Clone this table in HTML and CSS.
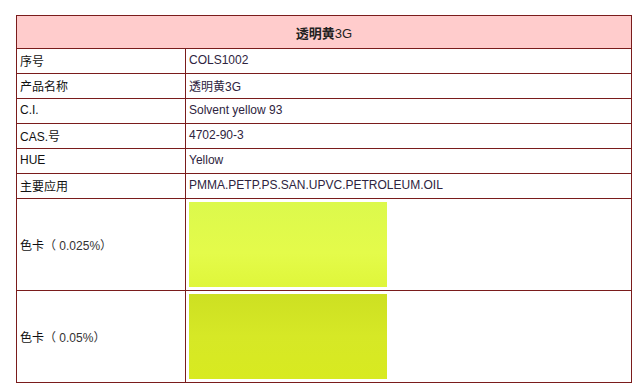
FILE: index.html
```html
<html lang="zh">

<head>
    <meta charset="UTF-8">
    <meta name="viewport" content="width=device-width, initial-scale=1.0">
    <title>透明黄3G</title>

    <link rel="stylesheet" href="styles.css">
</head>

<body>
    <table class="spec">
        <tr>
            <th colspan="2"><b>透明黄</b>3G</th>
        </tr>
        <tr>
            <td class="name">序号</td>
            <td>COLS1002</td>
        </tr>
        <tr>
            <td class="name">产品名称</td>
            <td>透明黄3G</td>
        </tr>
        <tr>
            <td class="name">C.I.</td>
            <td>Solvent yellow 93</td>
        </tr>
        <tr>
            <td class="name">CAS.号</td>
            <td>4702-90-3</td>
        </tr>
        <tr>
            <td class="name">HUE</td>
            <td>Yellow</td>
        </tr>
        <tr>
            <td class="name">主要应用</td>
            <td>PMMA.PETP.PS.SAN.UPVC.PETROLEUM.OIL</td>
        </tr>
        <tr class="card">
            <td class="name">色卡<span class="num">（ 0.025%）</span></td>
            <td><div class="swatch light"></div></td>
        </tr>
        <tr class="card">
            <td class="name">色卡<span class="num">（ 0.05%）</span></td>
            <td><div class="swatch deep"></div></td>
        </tr>
    </table>
</body>

</html>
```

FILE: styles.css
```css
* {
    box-sizing: border-box;
    margin: 0;
    padding: 0;
}

body {
    background: #fff;
    padding: 15px 0 0 16px;
    font-family: "Liberation Sans", "Noto Sans CJK SC", sans-serif;
    font-size: 12px;
    color: #333;
}

/* tables don't pick up the body font on their own here */
.spec {
    width: 616px;
    border-collapse: collapse;
    border: 1px solid #7a1c1c;
    font-family: inherit;
    font-size: 12px;
}

.spec th,
.spec td {
    border: 1px solid #7a1c1c;
    text-align: left;
    vertical-align: middle;
}

.spec th {
    height: 33px;
    background: #ffcccc;
    text-align: center;
    font-weight: normal;
    font-size: 13px;
    color: #222;
}

.spec th b {
    font-family: "Noto Sans CJK SC", sans-serif;
    font-weight: bold;
}

.spec td {
    height: 25px;
    padding: 0 3px 2px;
    color: #2e2440;
}

.spec td.name {
    width: 169px;
    color: #111;
}

.num {
    color: #333;
}

.card td {
    height: 92px;
    padding-bottom: 0;
}

.swatch {
    width: 198px;
    height: 85px;
}

.light {
    background: linear-gradient(#dcf94c, #e4fb4a 60%, #dff63a);
}

.deep {
    background: linear-gradient(#cde022, #d6e826 50%, #d8ea20);
}
```
